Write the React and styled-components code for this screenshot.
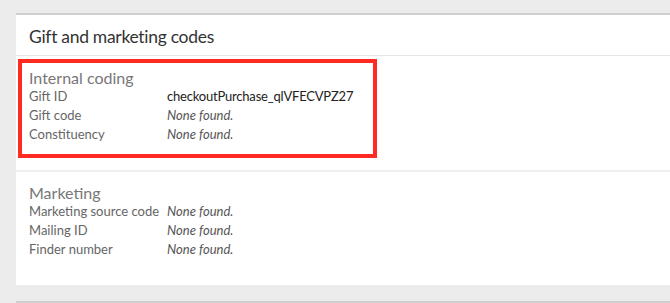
import React from "react";
import styled, { createGlobalStyle } from "styled-components";

const GlobalStyle = createGlobalStyle`
  html, body {
    margin: 0;
    padding: 0;
    overflow: hidden;
    background: #ececec;
    font-family: Lato, "Noto Sans", sans-serif;
  }
`;

const Page = styled.div`
  padding: 13px 0 0 16px;
`;

const Card = styled.div`
  background: #fff;
  border-top: 2px solid #cfcfcf;
  padding-bottom: 26px;
`;

const NextCard = styled.div`
  margin-top: 16px;
  background: #fff;
  border-top: 2px solid #cfcfcf;
  height: 40px;
`;

const Header = styled.h2`
  margin: 0;
  height: 40px;
  line-height: 44px;
  padding-left: 13px;
  font-size: 17.5px;
  letter-spacing: -0.3px;
  font-weight: 400;
  color: #333;
  border-bottom: 1px solid #e6e6e6;
`;

const Section = styled.div`
  padding: ${(p) => (p.highlighted ? "5px 0 10px 7px" : "11px 0 0 13px")};
  margin: ${(p) => (p.highlighted ? "3px 0 0 2px" : "0")};
  width: ${(p) => (p.highlighted ? "359px" : "auto")};
  box-sizing: border-box;
  border: ${(p) => (p.highlighted ? "4px solid #ff2b22" : "none")};
`;

const Divider = styled.hr`
  margin: 12px 0 0;
  border: none;
  border-top: 2px solid #f0f0f0;
`;

const SectionTitle = styled.div`
  font-size: 16px;
  line-height: 19px;
  color: #777;
`;

const Row = styled.div`
  display: flex;
  font-size: 13px;
  line-height: 19px;
  white-space: nowrap;
`;

const Label = styled.div`
  width: 138px;
  flex-shrink: 0;
  color: #666;
`;

const Value = styled.div`
  color: ${(p) => (p.empty ? "#555" : "#222")};
  font-style: ${(p) => (p.empty ? "italic" : "normal")};
  letter-spacing: ${(p) => (p.empty ? "0" : "-0.2px")};
`;

const internal = [
  ["Gift ID", "checkoutPurchase_qlVFECVPZ27"],
  ["Gift code", null],
  ["Constituency", null],
];

const marketing = [
  ["Marketing source code", null],
  ["Mailing ID", null],
  ["Finder number", null],
];

function Fields({ rows }) {
  return rows.map(([label, value]) => (
    <Row key={label}>
      <Label>{label}</Label>
      <Value empty={!value}>{value || "None found."}</Value>
    </Row>
  ));
}

export default function App() {
  return (
    <Page>
      <GlobalStyle />
      <Card>
        <Header>Gift and marketing codes</Header>
        <Section highlighted>
          <SectionTitle>Internal coding</SectionTitle>
          <Fields rows={internal} />
        </Section>
        <Divider />
        <Section>
          <SectionTitle>Marketing</SectionTitle>
          <Fields rows={marketing} />
        </Section>
      </Card>
      <NextCard />
    </Page>
  );
}
